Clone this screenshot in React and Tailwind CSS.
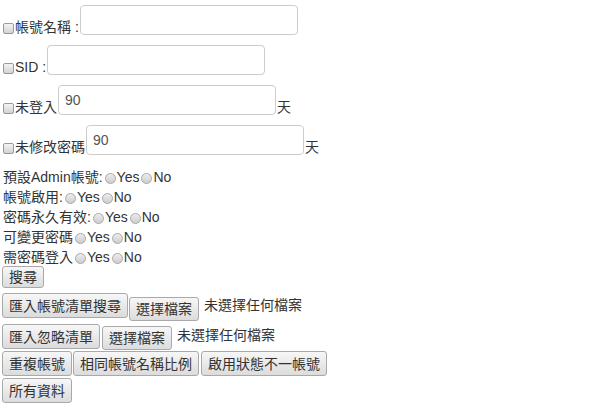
import React from 'react'

// 帳號查詢表單：勾選欄位、選項列、匯入與報表按鈕
const FONT = "font-['Liberation_Sans','Noto_Sans_CJK_TC',sans-serif]"

function Check() {
  return (
    <span className="ml-[3px] mr-[1px] mb-[1px] inline-block h-[11px] w-[11px] shrink-0 rounded-[2px] border border-[#9a9a9a] bg-linear-to-b from-[#f4f4f4] to-[#d2d2d2]" />
  )
}

function Radio() {
  return (
    <span className="ml-[2px] inline-block h-[11px] w-[11px] rounded-full border border-[#a8a8a8] bg-linear-to-b from-[#ededed] to-[#cdcdcd] align-[-2px]" />
  )
}

function Btn({ children, className = '' }) {
  return (
    <button
      type="button"
      className={
        'shrink-0 rounded-[3px] border border-[#a9a9a9] bg-linear-to-b from-[#f7f7f7] to-[#dcdcdc] px-[6px] text-[14px] leading-[20px] text-[#333] ' +
        className
      }
    >
      {children}
    </button>
  )
}

function FieldRow({ label, value, suffix }) {
  return (
    <div className="flex h-[40px] items-end pb-[5px]">
      <Check />
      <span className="mb-[-2px] whitespace-pre leading-[20px] text-[#333]">{label}</span>
      <input
        className="ml-[1px] h-[30px] w-[218px] rounded-[4px] border border-[#cccccc] bg-white px-[6px] text-[14px] text-[#555] outline-none"
        defaultValue={value}
      />
      {suffix ? <span className="mb-[-2px] ml-[1px] leading-[20px] text-[#333]">{suffix}</span> : null}
    </div>
  )
}

function OptionLine({ label }) {
  return (
    <div className="pl-[3px] leading-[20px] text-[#333]">
      <span>{label}</span>
      <Radio />
      <span className="ml-[1px]">Yes</span>
      <Radio />
      <span className="ml-[1px]">No</span>
    </div>
  )
}

export default function App() {
  return (
    <div className={`${FONT} h-[408px] w-[602px] overflow-hidden bg-white text-[14px] text-[#333]`}>
      <FieldRow label="帳號名稱 :" />
      <FieldRow label="SID :" />
      <FieldRow label="未登入" value="90" suffix="天" />
      <FieldRow label="未修改密碼" value="90" suffix="天" />

      <div className="mt-[7px]">
        <OptionLine label="預設Admin帳號:" />
        <OptionLine label="帳號啟用:" />
        <OptionLine label="密碼永久有效:" />
        <OptionLine label="可變更密碼" />
        <OptionLine label="需密碼登入" />
      </div>

      <div className="pl-[2px]">
        <div className="mt-[-1px] flex">
          <Btn className="h-[22px]">搜尋</Btn>
        </div>
        <div className="mt-[5px] flex items-start">
          <Btn className="h-[25px]">匯入帳號清單搜尋</Btn>
          <Btn className="ml-[1px] mt-[4px] h-[24px]">選擇檔案</Btn>
          <span className="ml-[5px] mt-[2px] leading-[20px]">未選擇任何檔案</span>
        </div>
        <div className="mt-[3px] flex items-start">
          <Btn className="h-[25px]">匯入忽略清單</Btn>
          <Btn className="ml-[2px] mt-[2px] h-[24px]">選擇檔案</Btn>
          <span className="ml-[5px] mt-[1px] leading-[20px]">未選擇任何檔案</span>
        </div>
        <div className="mt-[1px] flex items-start">
          <Btn className="h-[25px]">重複帳號</Btn>
          <Btn className="ml-[1px] h-[25px]">相同帳號名稱比例</Btn>
          <Btn className="ml-[2px] h-[25px]">啟用狀態不一帳號</Btn>
        </div>
        <div className="mt-[2px] flex">
          <Btn className="h-[25px]">所有資料</Btn>
        </div>
      </div>
    </div>
  )
}
